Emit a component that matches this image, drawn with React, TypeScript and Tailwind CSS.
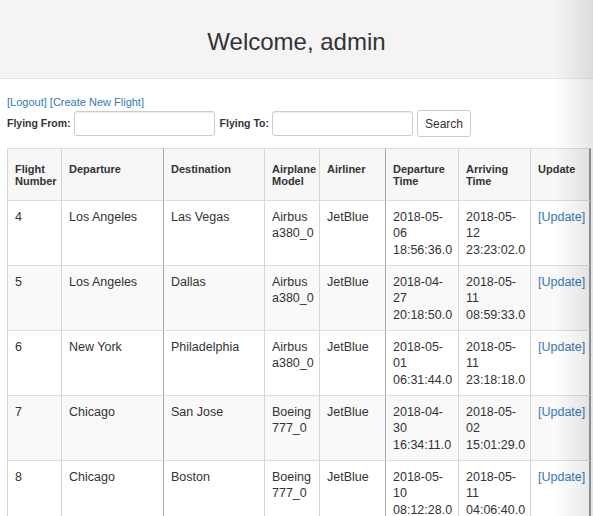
const cols = [
  { label: ["Flight", "Number"], w: "w-[54px]", dark: false },
  { label: ["Departure"], w: "w-[102px]", dark: false },
  { label: ["Destination"], w: "w-[101px]", dark: true },
  { label: ["Airplane", "Model"], w: "w-[55px]", dark: false },
  { label: ["Airliner"], w: "w-[66px]", dark: false },
  { label: ["Departure", "Time"], w: "w-[73px]", dark: true },
  { label: ["Arriving", "Time"], w: "w-[72px]", dark: false },
  { label: ["Update"], w: "w-[61px]", dark: false },
];

const flights = [
  ["4", "Los Angeles", "Las Vegas", ["Airbus", "a380_0"], "JetBlue", ["2018-05-", "06", "18:56:36.0"], ["2018-05-", "12", "23:23:02.0"]],
  ["5", "Los Angeles", "Dallas", ["Airbus", "a380_0"], "JetBlue", ["2018-04-", "27", "20:18:50.0"], ["2018-05-", "11", "08:59:33.0"]],
  ["6", "New York", "Philadelphia", ["Airbus", "a380_0"], "JetBlue", ["2018-05-", "01", "06:31:44.0"], ["2018-05-", "11", "23:18:18.0"]],
  ["7", "Chicago", "San Jose", ["Boeing", "777_0"], "JetBlue", ["2018-04-", "30", "16:34:11.0"], ["2018-05-", "02", "15:01:29.0"]],
  ["8", "Chicago", "Boston", ["Boeing", "777_0"], "JetBlue", ["2018-05-", "10", "08:12:28.0"], ["2018-05-", "11", "04:06:40.0"]],
];

function Lines({ value }: { value: string | string[] }) {
  const parts = Array.isArray(value) ? value : [value];
  return (
    <>
      {parts.map((p, i) => (
        <div key={i} className="whitespace-nowrap">
          {p}
        </div>
      ))}
    </>
  );
}

export default function App() {
  const cellBorder = (i: number) =>
    `border-t border-t-[#dddddd] border-l ${cols[i].dark ? "border-l-[#a9a9a9]" : "border-l-[#d6d6d6]"} ${
      i === cols.length - 1 ? "border-r-2 border-r-[#9a9a9a]" : ""
    }`;

  return (
    <div className="relative min-h-screen bg-white text-[#333] font-['Liberation_Sans',Arial,sans-serif]">
      <div className="h-[79px] bg-[#f4f4f4] border-b border-[#e4e4e4] flex items-center justify-center pt-[6px]">
        <h1 className="text-[24px] leading-none">Welcome, admin</h1>
      </div>

      <div className="px-[7px]">
        <div className="mt-[16px] text-[11px] leading-[15px] text-[#337ab7]">
          <a href="#">[Logout]</a> <a href="#">[Create New Flight]</a>
        </div>

        <div className="flex items-center h-[27px]">
          <span className="text-[10.5px] font-bold">Flying From:</span>
          <input className="ml-[3px] w-[141px] h-[25px] border border-[#cccccc] rounded-[3px] shadow-[inset_0_1px_1px_rgba(0,0,0,0.075)] bg-white" />
          <span className="ml-[5px] text-[10.5px] font-bold">Flying To:</span>
          <input className="ml-[3px] w-[141px] h-[25px] border border-[#cccccc] rounded-[3px] shadow-[inset_0_1px_1px_rgba(0,0,0,0.075)] bg-white" />
          <button className="ml-[4px] w-[54px] h-[27px] border border-[#cccccc] rounded-[3px] bg-white text-[12px] text-[#333]">
            Search
          </button>
        </div>

        <table className="mt-[11px] w-[584px] table-fixed border-separate border-spacing-0">
          <colgroup>
            {cols.map((c, i) => (
              <col key={i} className={c.w} />
            ))}
          </colgroup>
          <tbody>
            <tr className="bg-[#f7f7f7]">
              {cols.map((c, i) => (
                <th
                  key={i}
                  className={`${cellBorder(i)} text-left align-top font-bold text-[11px] leading-[12px] pl-[7px] pr-[4px] pt-[14px] pb-[13px]`}
                >
                  <Lines value={c.label} />
                </th>
              ))}
            </tr>
            {flights.map((f, r) => (
              <tr key={r} className={r % 2 === 1 ? "bg-[#f9f9f9]" : "bg-white"}>
                {f.map((v, i) => (
                  <td
                    key={i}
                    className={`${cellBorder(i)} align-top text-[12.5px] leading-[16.5px] pl-[7px] pr-[2px] pt-[7.5px] pb-[7px]`}
                  >
                    <Lines value={v} />
                  </td>
                ))}
                <td className={`${cellBorder(7)} align-top text-[12.5px] leading-[16.5px] pl-[7px] pt-[7.5px] pb-[7px]`}>
                  <a href="#" className="text-[#337ab7]">
                    [Update]
                  </a>
                </td>
              </tr>
            ))}
          </tbody>
        </table>
      </div>

      <div className="pointer-events-none absolute top-0 right-0 h-full w-[38px] bg-gradient-to-r from-transparent to-black/10" />
    </div>
  );
}
